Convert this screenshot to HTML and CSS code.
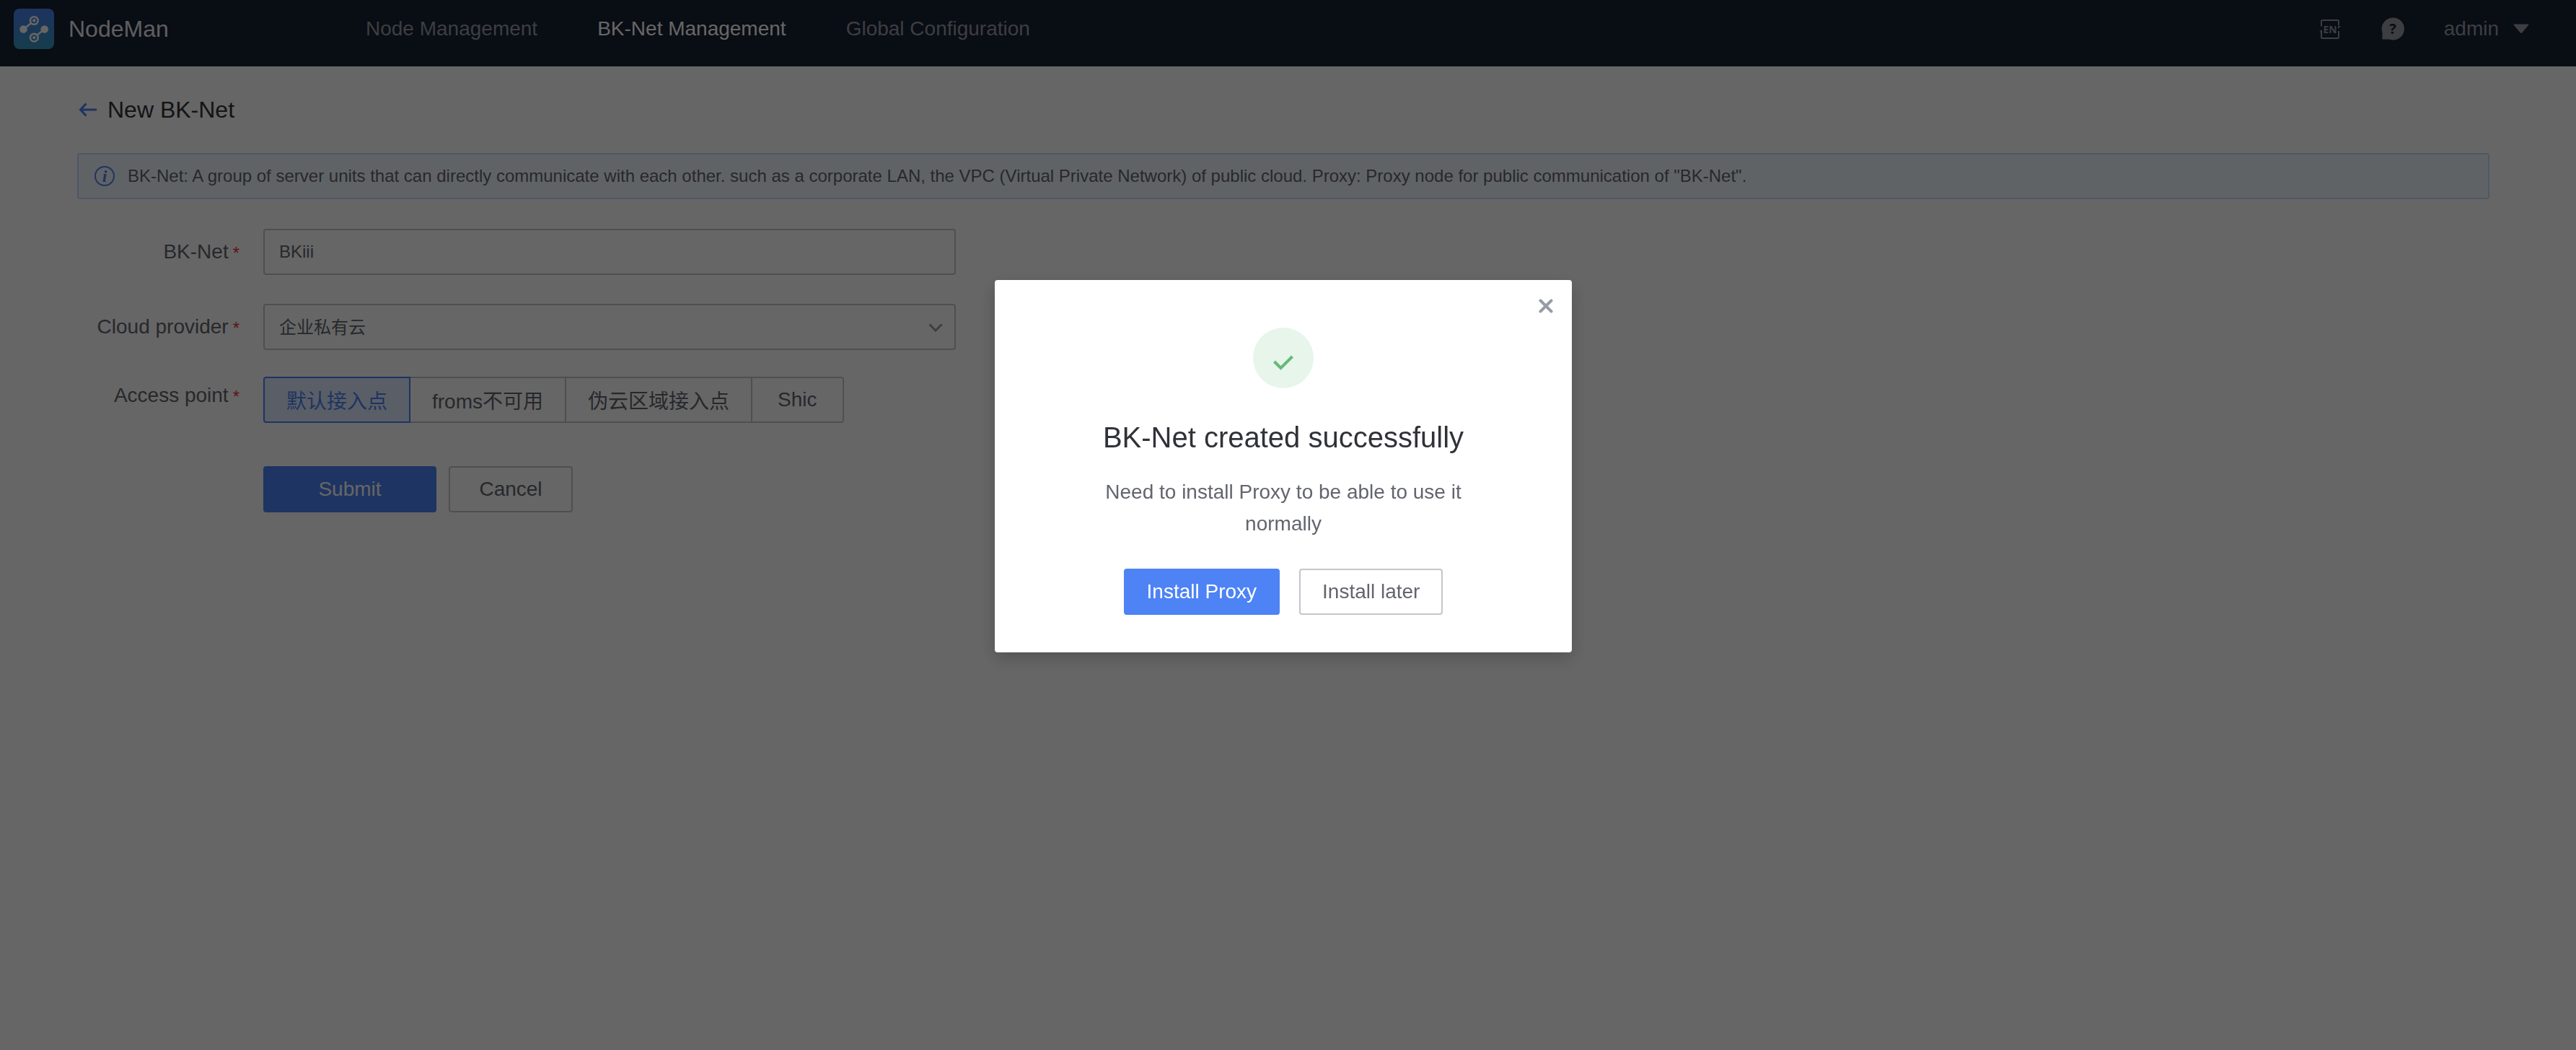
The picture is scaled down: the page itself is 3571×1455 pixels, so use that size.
FILE: index.html
```html
<!DOCTYPE html>
<html lang="en">
<head>
<meta charset="utf-8">
<title>NodeMan</title>
<meta name="viewport" content="width=device-width, initial-scale=1">
<link rel="stylesheet" href="styles.css">
</head>
<body>
<header class="header">
  <a class="brand" href="#">
    <svg class="brand-logo" viewBox="0 0 56 56" aria-hidden="true">
      <defs>
        <linearGradient id="logo-fill" x1="0" y1="0" x2="0" y2="1">
          <stop offset="0" stop-color="#4d7ef0"/>
          <stop offset="1" stop-color="#3599bd"/>
        </linearGradient>
      </defs>
      <rect width="56" height="56" rx="8" fill="url(#logo-fill)"/>
      <path d="M13.500 28.500 L28.300 16.700 M42.500 28.500 L28.300 40" stroke="#fff" stroke-width="2.400"/>
      <circle cx="13.500" cy="28.500" r="5.300" fill="#fff"/>
      <circle cx="42.700" cy="28.500" r="5.300" fill="#fff"/>
      <circle cx="28.300" cy="16.500" r="6.600" fill="#fff"/>
      <circle cx="28.300" cy="40.200" r="6.600" fill="#fff"/>
      <circle cx="28.300" cy="16.500" r="3.100" fill="#fff" stroke="#4684df" stroke-width="1.900"/>
      <circle cx="28.300" cy="40.200" r="3.100" fill="#fff" stroke="#3b91cb" stroke-width="1.900"/>
    </svg>
    <span class="brand-name">NodeMan</span>
  </a>
  <nav class="nav">
    <a class="nav-link" href="#">Node Management</a>
    <a class="nav-link nav-link-active" href="#" aria-current="page">BK-Net Management</a>
    <a class="nav-link" href="#">Global Configuration</a>
  </nav>
  <div class="tools">
    <button class="tool" type="button" aria-label="Language">
      <svg class="tool-icon" viewBox="0 0 32 32" aria-hidden="true">
        <path d="M4 12.500 V5.500 Q4 4 5.500 4 H26.500 Q28 4 28 5.500 V11 M28 19 V27.500 Q28 29 26.500 29 H5.500 Q4 29 4 27.500 V20" fill="none" stroke="currentColor" stroke-width="2"/>
        <path d="M1 20.500 L5 16.500 V20.500 Z M31 12 L27 16 V12 Z" fill="currentColor"/>
        <text class="glyph-language" x="16" y="22" text-anchor="middle" fill="currentColor">EN</text>
      </svg>
    </button>
    <button class="tool" type="button" aria-label="Help">
      <svg class="tool-icon" viewBox="0 0 32 32" aria-hidden="true">
        <path d="M16 0.500 A15.500 15.500 0 1 1 11 30.500 H1.500 V21 A15.500 15.500 0 0 1 16 0.500 Z" fill="currentColor"/>
        <text class="glyph-help" x="16" y="23" text-anchor="middle" fill="#182132">?</text>
      </svg>
    </button>
    <button class="user" type="button">admin
      <svg class="user-caret" viewBox="0 0 22 14" aria-hidden="true"><path d="M1 0.500 H21 Q22 1 21 2 L12 12.500 Q11 13.500 10 12.500 L1 2 Q0 1 1 0.500 Z" fill="currentColor"/></svg>
    </button>
  </div>
</header>

<main class="content">
  <div class="title-row">
    <a class="back" href="#" aria-label="Back">
      <svg class="back-icon" viewBox="0 0 26 20" aria-hidden="true"><path d="M10.500 1.500 L2.500 10 L10.500 18.500 M2.500 10 H25" fill="none" stroke="#4d83f5" stroke-width="3"/></svg>
    </a>
    <h1 class="title">New BK-Net</h1>
  </div>

  <div class="notice">
    <svg class="notice-icon" viewBox="0 0 28 28" aria-hidden="true">
      <circle cx="14" cy="14" r="13" fill="none" stroke="#4d83f5" stroke-width="2"/>
      <text class="glyph-info" x="14" y="22" text-anchor="middle" fill="#4d83f5">i</text>
    </svg>
    <p class="notice-text">BK-Net: A group of server units that can directly communicate with each other. such as a corporate LAN, the VPC (Virtual Private Network) of public cloud. Proxy: Proxy node for public communication of "BK-Net".</p>
  </div>

  <form class="form">
    <div class="row">
      <label class="label" for="net-name">BK-Net<span class="required">*</span></label>
      <input class="control" id="net-name" type="text" value="BKiii">
    </div>
    <div class="row">
      <label class="label" for="provider">Cloud provider<span class="required">*</span></label>
      <div class="select-wrap">
        <select class="control" id="provider"><option>企业私有云</option></select>
        <svg class="select-arrow" viewBox="0 0 20 12" aria-hidden="true"><path d="M1.500 1.500 L10 10 L18.500 1.500" fill="none" stroke="#979ba5" stroke-width="3"/></svg>
      </div>
    </div>
    <div class="row row-access" role="radiogroup" aria-labelledby="access-label">
      <span class="label label-access" id="access-label">Access point<span class="required">*</span></span>
      <div class="segments">
        <label class="segment"><input class="segment-input" type="radio" name="access" checked>默认接入点</label>
        <label class="segment"><input class="segment-input" type="radio" name="access">froms不可用</label>
        <label class="segment"><input class="segment-input" type="radio" name="access">伪云区域接入点</label>
        <label class="segment"><input class="segment-input" type="radio" name="access">Shic</label>
      </div>
    </div>
    <div class="actions">
      <button class="button button-primary button-submit" type="button">Submit</button>
      <button class="button button-cancel" type="button">Cancel</button>
    </div>
  </form>
</main>

<div class="overlay">
  <section class="dialog" role="dialog" aria-modal="true" aria-labelledby="dialog-title">
    <button class="dialog-close" type="button" aria-label="Close">
      <svg class="close-icon" viewBox="0 0 20 20" aria-hidden="true"><path d="M2.500 2.500 L17.500 17.500 M17.500 2.500 L2.500 17.500" stroke="#979ba5" stroke-width="4" stroke-linecap="round"/></svg>
    </button>
    <svg class="dialog-mark" viewBox="0 0 84 84" aria-hidden="true">
      <circle cx="42" cy="42" r="42" fill="#e7f5eb"/>
      <path d="M29.500 47 L38.500 56 L54.500 40" fill="none" stroke="#65ba76" stroke-width="4"/>
    </svg>
    <h2 class="dialog-title" id="dialog-title">BK-Net created successfully</h2>
    <p class="dialog-text">Need to install Proxy to be able to use it normally</p>
    <div class="dialog-actions">
      <button class="button button-primary" type="button">Install Proxy</button>
      <button class="button" type="button">Install later</button>
    </div>
  </section>
</div>
</body>
</html>
```
FILE: styles.css
```css
* {
  box-sizing: border-box;
}

body {
  margin: 0;
  min-height: 100vh;
  background: #fff;
  color: #63656e;
  font-family: "Liberation Sans", "Noto Sans CJK SC", sans-serif;
  font-size: 28px;
}

button,
input,
select {
  font: inherit;
  color: inherit;
}

/* Top bar */
.header {
  display: flex;
  align-items: center;
  height: 92px;
  padding: 0 65px 12px 19px;
  background: #182132;
  color: #979ba5;
}

.brand {
  display: flex;
  align-items: center;
  gap: 20px;
  width: 488px;
  color: #eaebf0;
  text-decoration: none;
}

.brand-logo {
  width: 56px;
  height: 56px;
}

.brand-name {
  font-size: 32px;
}

.nav {
  display: flex;
  gap: 83px;
}

.nav-link {
  color: #979ba5;
  text-decoration: none;
}

.nav-link-active {
  color: #fff;
}

.tools {
  display: flex;
  align-items: center;
  gap: 55px;
  margin-left: auto;
}

.tool,
.user {
  display: flex;
  align-items: center;
  padding: 0;
  border: 0;
  background: none;
}

.tool-icon {
  width: 32px;
  height: 32px;
}

.glyph-language {
  font: 700 14px "Open Sans", sans-serif;
}

.glyph-help {
  font: 700 20px "Open Sans", sans-serif;
}

.glyph-info {
  font: italic 700 24px "Liberation Serif", serif;
}

.user {
  gap: 20px;
}

.user-caret {
  width: 22px;
  height: 14px;
}

/* Page */
.content {
  padding: 40px 120px 0 107px;
}

.title-row {
  display: flex;
  align-items: center;
  gap: 14px;
  height: 40px;
  padding-left: 2px;
}

.back {
  display: flex;
}

.back-icon {
  width: 26px;
  height: 20px;
}

.title {
  margin: 0;
  color: #313238;
  font-size: 32px;
  font-weight: 400;
}

.notice {
  display: flex;
  align-items: center;
  gap: 18px;
  min-height: 64px;
  margin-top: 40px;
  padding: 0 22px;
  border: 2px solid #c5daff;
  border-radius: 4px;
  background: #f0f8ff;
}

.notice-icon {
  flex: none;
  width: 28px;
  height: 28px;
}

.notice-text {
  margin: 0;
  font-size: 24px;
}

/* Form */
.form {
  display: flex;
  flex-direction: column;
  gap: 40px;
  margin-top: 41px;
}

.row {
  display: flex;
  align-items: center;
}

.row-access {
  align-items: flex-start;
  margin-top: -3px;
}

.label {
  display: flex;
  flex: none;
  justify-content: flex-end;
  align-items: center;
  gap: 6px;
  width: 258px;
  padding-right: 33px;
}

.label-access {
  height: 52px;
}

.required {
  height: 20px;
  color: #ea3636;
  font-size: 24px;
  line-height: 24px;
}

.control {
  width: 960px;
  max-width: 100%;
  height: 64px;
  padding: 0 20px;
  border: 2px solid #c4c6cc;
  border-radius: 4px;
  background: #fff;
  font-size: 24px;
  appearance: none;
}

.select-wrap {
  position: relative;
}

.select-arrow {
  position: absolute;
  top: 27px;
  right: 18px;
  width: 20px;
  height: 12px;
}

.segments {
  display: flex;
}

.segment {
  position: relative;
  display: flex;
  align-items: center;
  height: 64px;
  margin-left: -2px;
  padding: 0 30px;
  border: 2px solid #c4c6cc;
}

.segment-input {
  position: absolute;
  inset: 0;
  margin: 0;
  opacity: 0;
}

.segment:first-child {
  margin-left: 0;
  border-radius: 4px 0 0 4px;
}

.segment:last-child {
  padding: 0 35px;
  border-radius: 0 4px 4px 0;
}

.segment:has(:checked) {
  z-index: 1;
  border-color: #4d83f5;
  background: #e1ecff;
  color: #4d83f5;
}

.actions {
  display: flex;
  gap: 17px;
  margin-top: 20px;
  padding-left: 258px;
}

.button {
  height: 64px;
  padding: 0 30px;
  border: 2px solid #c4c6cc;
  border-radius: 4px;
  background: #fff;
}

.button-primary {
  border-color: #4d83f5;
  background: #4d83f5;
  color: #fff;
}

.button-submit {
  width: 240px;
}

.button-cancel {
  width: 172px;
}

/* Dialog */
.overlay {
  position: fixed;
  inset: 0;
  z-index: 10;
  display: flex;
  justify-content: center;
  align-items: flex-start;
  padding: 388px 13px 0 0;
  background: rgba(0, 0, 0, 0.6);
}

.dialog {
  position: relative;
  display: flex;
  flex-direction: column;
  align-items: center;
  width: 800px;
  padding: 66px 140px 52px;
  border-radius: 4px;
  background: #fff;
  box-shadow: 0 8px 24px rgba(0, 0, 0, 0.2);
}

.dialog-close {
  position: absolute;
  top: 26px;
  right: 26px;
  display: flex;
  padding: 0;
  border: 0;
  background: none;
}

.close-icon {
  width: 20px;
  height: 20px;
}

.dialog-mark {
  width: 84px;
  height: 84px;
}

.dialog-title {
  margin: 40px 0 0;
  color: #313238;
  font-size: 40px;
  font-weight: 400;
  line-height: 56px;
}

.dialog-text {
  margin: 26px 0 0;
  line-height: 44px;
  text-align: center;
}

.dialog-actions {
  display: flex;
  gap: 27px;
  margin-top: 40px;
}
```
